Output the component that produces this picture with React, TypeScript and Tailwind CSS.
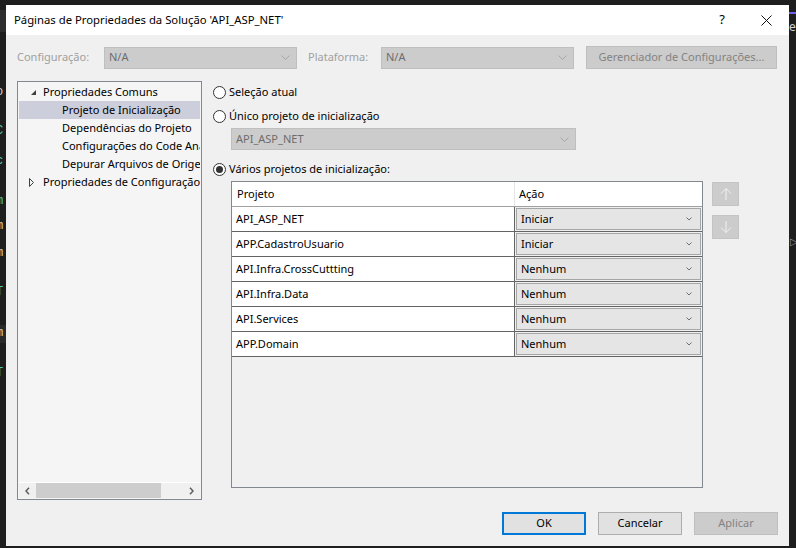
import React from "react";

const FONT = "font-['Noto_Sans','Open_Sans',sans-serif]";

function Chevron({ className }: { className?: string }) {
  return (
    <svg width="9" height="5" viewBox="0 0 9 5" className={className}>
      <path d="M0.5 0.5 L4.5 4.5 L8.5 0.5" fill="none" stroke="currentColor" strokeWidth="1" />
    </svg>
  );
}

function SmallChevron() {
  return (
    <svg width="6" height="4" viewBox="0 0 6 4" className="text-[#707070]">
      <path d="M0.5 0.5 L3 3 L5.5 0.5" fill="none" stroke="currentColor" strokeWidth="1" />
    </svg>
  );
}

function Radio({ checked }: { checked?: boolean }) {
  return (
    <div className="w-[13px] h-[13px] rounded-full border border-[#333333] bg-white flex items-center justify-center shrink-0">
      {checked && <div className="w-[7px] h-[7px] rounded-full bg-[#333333]" />}
    </div>
  );
}

function DisabledCombo({ text, className }: { text: string; className: string }) {
  return (
    <div className={`h-[22px] bg-[#cccccc] border border-[#bfbfbf] flex items-center justify-between pl-[4px] pr-[6px] ${className}`}>
      <span className="text-[#6d6d6d] text-[11px]">{text}</span>
      <Chevron className="text-[#a6a6a6]" />
    </div>
  );
}

const rows: [string, string][] = [
  ["API_ASP_NET", "Iniciar"],
  ["APP.CadastroUsuario", "Iniciar"],
  ["API.Infra.CrossCuttting", "Nenhum"],
  ["API.Infra.Data", "Nenhum"],
  ["API.Services", "Nenhum"],
  ["APP.Domain", "Nenhum"],
];

function ArrowBtn({ up }: { up?: boolean }) {
  return (
    <div className="w-[27px] h-[24px] bg-[#cccccc] border border-[#c4c4c4] flex items-center justify-center">
      <svg width="12" height="14" viewBox="0 0 12 14">
        {up ? (
          <path d="M6 1.5 V13 M1 6.5 L6 1.5 L11 6.5" fill="none" stroke="#f2f2f2" strokeWidth="1" />
        ) : (
          <path d="M6 1 V12.5 M1 7.5 L6 12.5 L11 7.5" fill="none" stroke="#f2f2f2" strokeWidth="1" />
        )}
      </svg>
    </div>
  );
}

export default function App() {
  return (
    <div className={`relative w-[796px] h-[548px] bg-[#1e1e1e] overflow-hidden pl-[6px] pt-[5px] ${FONT}`}>
      {/* background editor fragments */}
      <div className="absolute left-0 top-[10px] w-[6px] h-[22px] bg-[#2d2d2d]" />
      <span className="absolute left-[-4px] top-[83px] text-[12px] text-[#d4d4d4] font-['Liberation_Mono',monospace]">o</span>
      <span className="absolute left-[-4px] top-[122px] text-[12px] text-[#4ec9b0] font-['Liberation_Mono',monospace]">C</span>
      <span className="absolute left-[-4px] top-[152px] text-[12px] text-[#4ec9b0] font-['Liberation_Mono',monospace]">c</span>
      <span className="absolute left-[-4px] top-[192px] text-[12px] text-[#4ec9b0] font-['Liberation_Mono',monospace]">m</span>
      <span className="absolute left-[-4px] top-[217px] text-[12px] text-[#dcdcaa] font-['Liberation_Mono',monospace]">m</span>
      <span className="absolute left-[-4px] top-[244px] text-[12px] text-[#dcdcaa] font-['Liberation_Mono',monospace]">m</span>
      <span className="absolute left-[-4px] top-[283px] text-[12px] text-[#4ec9b0] font-['Liberation_Mono',monospace]">T</span>
      <div className="absolute left-0 top-[325px] w-[6px] h-[18px] bg-[#2a2a2a]" />
      <span className="absolute left-[-4px] top-[324px] text-[12px] text-[#dcdcaa] font-['Liberation_Mono',monospace]">m</span>
      <span className="absolute left-[-4px] top-[364px] text-[12px] text-[#4ec9b0] font-['Liberation_Mono',monospace]">T</span>
      <div className="absolute left-[789px] top-[12px] w-[7px] h-[2px] bg-[#7160e8]" />
      <span className="absolute left-[789px] top-[18px] text-[12px] text-[#d4d4d4]">er</span>
      <span className="absolute left-[790px] top-[234px] text-[10px] text-[#9a9a9a]">▷</span>

      {/* dialog */}
      <div className="w-[783px] h-[541px] bg-[#f0f0f0] flex flex-col">
        {/* title bar */}
        <div className="h-[30px] bg-white flex items-center shrink-0">
          <span className="pl-[8px] text-[11.3px] text-black">Páginas de Propriedades da Solução 'API_ASP_NET'</span>
          <div className="flex-1" />
          <span className="w-[20px] text-center text-[13px] text-black mr-[27px]">?</span>
          <div className="w-[14px] h-[14px] flex items-center justify-center mr-[16px]">
            <svg width="11" height="11" viewBox="0 0 11 11">
              <path d="M0.5 0.5 L10.5 10.5 M10.5 0.5 L0.5 10.5" stroke="#111" strokeWidth="1" />
            </svg>
          </div>
        </div>

        {/* toolbar */}
        <div className="mt-[11px] h-[23px] flex items-center shrink-0">
          <span className="ml-[11px] w-[87px] text-[11px] text-[#a0a0a0]">Configuração:</span>
          <DisabledCombo text="N/A" className="w-[193px]" />
          <span className="ml-[11px] w-[73px] text-[11px] text-[#a0a0a0]">Plataforma:</span>
          <DisabledCombo text="N/A" className="w-[193px]" />
          <div className="ml-[12px] w-[191px] h-[23px] bg-[#cccccc] border border-[#bfbfbf] flex items-center justify-center text-[11px] text-[#838383]">
            Gerenciador de Configurações...
          </div>
        </div>

        {/* main area */}
        <div className="mt-[12px] h-[419px] flex shrink-0">
          {/* tree */}
          <div className="ml-[11px] w-[185px] h-full border border-[#828790] bg-[#f5f5f5] p-[1px] flex flex-col">
            <div className="flex-1 overflow-hidden text-[11px] text-black">
              <div className="h-[18px] flex items-center whitespace-nowrap relative">
                <svg width="5" height="5" viewBox="0 0 5 5" className="absolute left-[12px] top-[7px]">
                  <polygon points="5,0 5,5 0,5" fill="#404040" />
                </svg>
                <span className="pl-[24px]">Propriedades Comuns</span>
              </div>
              <div className="h-[18px] flex items-center whitespace-nowrap bg-[#cccedb]">
                <span className="pl-[43px]">Projeto de Inicialização</span>
              </div>
              <div className="h-[18px] flex items-center whitespace-nowrap">
                <span className="pl-[43px]">Dependências do Projeto</span>
              </div>
              <div className="h-[18px] flex items-center whitespace-nowrap">
                <span className="pl-[43px]">Configurações do Code Analysis</span>
              </div>
              <div className="h-[18px] flex items-center whitespace-nowrap">
                <span className="pl-[43px]">Depurar Arquivos de Origem</span>
              </div>
              <div className="h-[18px] flex items-center whitespace-nowrap relative">
                <svg width="5" height="9" viewBox="0 0 5 9" className="absolute left-[10px] top-[5px]">
                  <polygon points="0.5,0.5 4.5,4.5 0.5,8.5" fill="none" stroke="#404040" strokeWidth="1" />
                </svg>
                <span className="pl-[24px]">Propriedades de Configuração</span>
              </div>
            </div>
            {/* scrollbar */}
            <div className="h-[16px] border-t border-white bg-[#f0f0f0] flex items-center shrink-0">
              <div className="w-[17px] h-full flex items-center justify-center">
                <svg width="5" height="8" viewBox="0 0 5 8">
                  <path d="M4 0.8 L1 4 L4 7.2" fill="none" stroke="#606060" strokeWidth="1.6" />
                </svg>
              </div>
              <div className="w-[125px] h-[15px] bg-[#cdcdcd]" />
              <div className="flex-1" />
              <div className="w-[17px] h-full flex items-center justify-center">
                <svg width="5" height="8" viewBox="0 0 5 8">
                  <path d="M1 0.8 L4 4 L1 7.2" fill="none" stroke="#606060" strokeWidth="1.6" />
                </svg>
              </div>
            </div>
          </div>

          {/* right panel */}
          <div className="ml-[11px] flex flex-col text-[11px] text-black">
            <div className="mt-[2px] h-[18px] flex items-center gap-[3px]">
              <Radio />
              <span>Seleção atual</span>
            </div>
            <div className="mt-[6px] h-[18px] flex items-center gap-[3px]">
              <Radio />
              <span>Único projeto de inicialização</span>
            </div>
            <DisabledCombo text="API_ASP_NET" className="mt-[3px] ml-[18px] w-[345px]" />
            <div className="mt-[10px] h-[18px] flex items-center gap-[3px]">
              <Radio checked />
              <span>Vários projetos de inicialização:</span>
            </div>
            <div className="mt-[3px] flex">
              {/* table */}
              <div className="ml-[18px] w-[472px] h-[307px] border border-[#828790] bg-[#f0f0f0] flex flex-col">
                <div className="h-[25px] bg-white border-b border-[#a0a0a0] flex shrink-0">
                  <div className="w-[283px] pl-[5px] flex items-center border-r border-[#e5e5e5]">Projeto</div>
                  <div className="flex-1 pl-[4px] flex items-center">Ação</div>
                </div>
                {rows.map(([p, a]) => (
                  <div key={p} className="h-[25px] border-b border-[#646464] flex shrink-0">
                    <div className="w-[283px] bg-white pl-[4px] flex items-center border-r border-[#646464] whitespace-nowrap">{p}</div>
                    <div className="flex-1 bg-[#f0f0f0] p-[1px] flex">
                      <div className="flex-1 bg-[#e5e5e5] border border-[#a6a6a6] flex items-center justify-between pl-[4px] pr-[8px]">
                        <span>{a}</span>
                        <SmallChevron />
                      </div>
                    </div>
                  </div>
                ))}
              </div>
              <div className="ml-[9px] flex flex-col gap-[9px] mt-[1px]">
                <ArrowBtn up />
                <ArrowBtn />
              </div>
            </div>
          </div>
        </div>

        {/* bottom buttons */}
        <div className="mt-[12px] flex justify-end gap-[12px] pr-[11px] text-[11px]">
          <div className="w-[84px] h-[23px] bg-[#e1e1e1] border-2 border-[#0078d7] flex items-center justify-center text-black">OK</div>
          <div className="w-[84px] h-[23px] bg-[#e1e1e1] border border-[#adadad] flex items-center justify-center text-black">Cancelar</div>
          <div className="w-[84px] h-[23px] bg-[#cccccc] border border-[#bfbfbf] flex items-center justify-center text-[#838383]">Aplicar</div>
        </div>
      </div>
    </div>
  );
}
